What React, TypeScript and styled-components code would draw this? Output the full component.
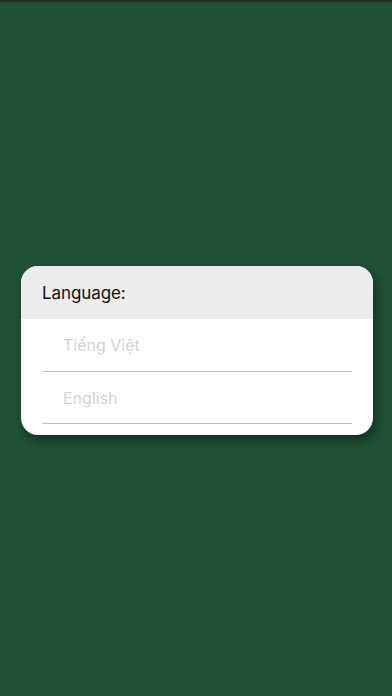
import React from "react";
import styled, { createGlobalStyle } from "styled-components";

const Global = createGlobalStyle`
  html, body { margin: 0; padding: 0; }
  body { background: #215237; font-family: Inter, "Noto Sans", sans-serif; }
`;

const Page = styled.div`
  box-sizing: border-box;
  height: 696px;
  background: #215237;
  border-top: 2px solid #2a2b2a;
  display: flex;
  flex-direction: column;
  justify-content: flex-start;
  padding: 264px 19px 0 21px;
`;

const Card = styled.div`
  width: 352px;
  background: #ffffff;
  border-radius: 17px;
  overflow: hidden;
  box-shadow: 3px 5px 12px rgba(0, 0, 0, 0.45);
  padding-bottom: 11px;
`;

const Header = styled.div`
  height: 53px;
  background: #ececec;
  display: flex;
  align-items: center;
  padding-left: 21px;
  font-size: 17px;
  color: #111;
  letter-spacing: -0.1px;
`;

const List = styled.div`
  display: flex;
  flex-direction: column;
  padding: 0 21px;
`;

const Item = styled.div<{ $h: number }>`
  height: ${(p) => p.$h}px;
  border-bottom: 1px solid #bdbdbd;
  display: flex;
  align-items: center;
  padding-left: 21px;
  font-size: 16px;
  color: #d2d2d2;
`;

export default function App() {
  return (
    <>
      <Global />
      <Page>
        <Card>
          <Header>Language:</Header>
          <List>
            <Item $h={52}>Tiếng Việt</Item>
            <Item $h={51}>English</Item>
          </List>
        </Card>
      </Page>
    </>
  );
}
